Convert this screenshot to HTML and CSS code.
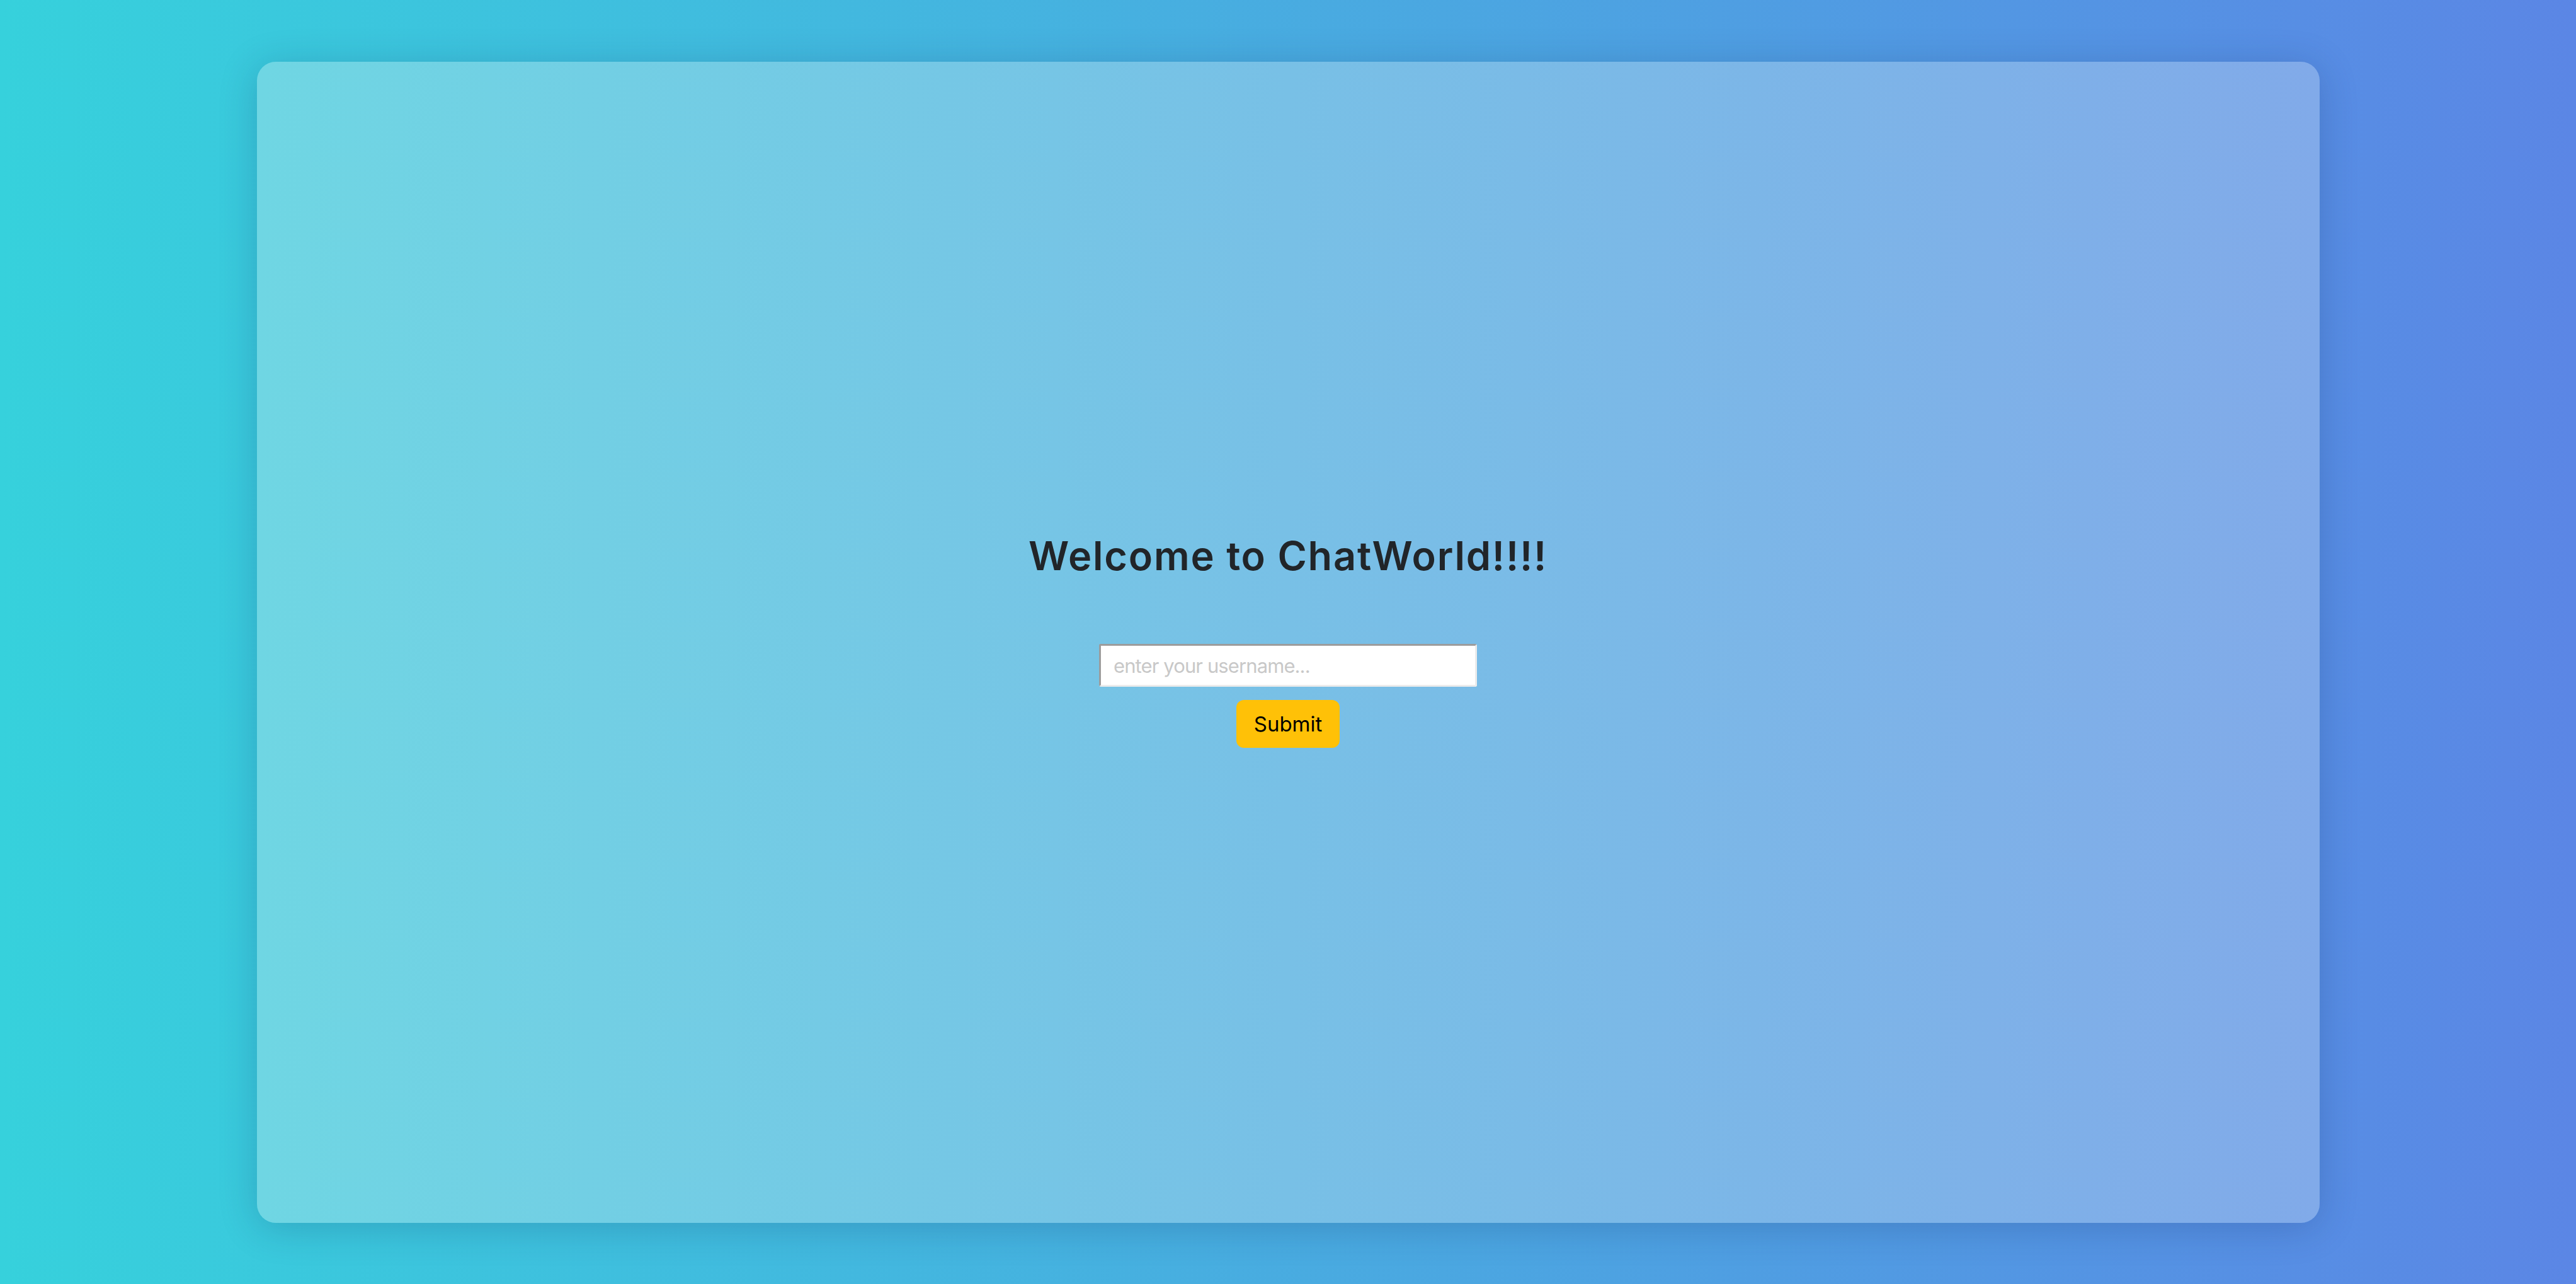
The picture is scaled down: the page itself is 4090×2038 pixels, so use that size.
FILE: index.html
```html
<!DOCTYPE html>
<html lang="en">
<head>
<meta charset="utf-8">
<title>ChatWorld</title>
<link rel="stylesheet" href="styles.css">
</head>
<body>
<main class="card">
  <h1 class="title">Welcome to ChatWorld!!!!</h1>
  <form class="login" onsubmit="return false;">
    <input class="username" type="text" placeholder="enter your username...">
    <button class="submit" type="submit">Submit</button>
  </form>
</main>
</body>
</html>
```

FILE: styles.css
```css
html, body {
  margin: 0;
  padding: 0;
  height: 100%;
}

body {
  background: linear-gradient(to right, #36d1dc, #5b86e5);
  display: flex;
  align-items: center;
  justify-content: center;
  font-family: Inter, "Noto Sans", sans-serif;
}

.card {
  box-sizing: border-box;
  width: 3275px;
  height: 1843px;
  border-radius: 30px;
  background: linear-gradient(to right, #6fd6e3, #81aae9);
  box-shadow: 0 8px 60px rgba(20, 40, 90, 0.22);
  display: flex;
  flex-direction: column;
  align-items: center;
  justify-content: center;
}

.title {
  margin: 0 0 108px;
  font-size: 63px;
  line-height: 63px;
  font-weight: 600;
  color: #212529;
  letter-spacing: 1.8px;
}

.login {
  display: flex;
  flex-direction: column;
  align-items: center;
  gap: 21px;
}

.username {
  box-sizing: border-box;
  width: 600px;
  height: 68px;
  padding: 0 20px;
  border-style: solid;
  border-width: 3px;
  border-color: #9c9c9c #ececec #ececec #9c9c9c;
  border-radius: 3px;
  background: #fff;
  font-family: Inter, "Noto Sans", sans-serif;
  font-size: 31px;
  letter-spacing: -0.9px;
  color: #222;
  outline: none;
}

.username::placeholder {
  color: #c8c8c8;
}

.submit {
  box-sizing: border-box;
  width: 164px;
  height: 76px;
  padding: 0;
  border: none;
  border-radius: 12px;
  background: #ffc107;
  font-family: Inter, "Noto Sans", sans-serif;
  font-size: 33px;
  color: #000;
  cursor: pointer;
}
```
